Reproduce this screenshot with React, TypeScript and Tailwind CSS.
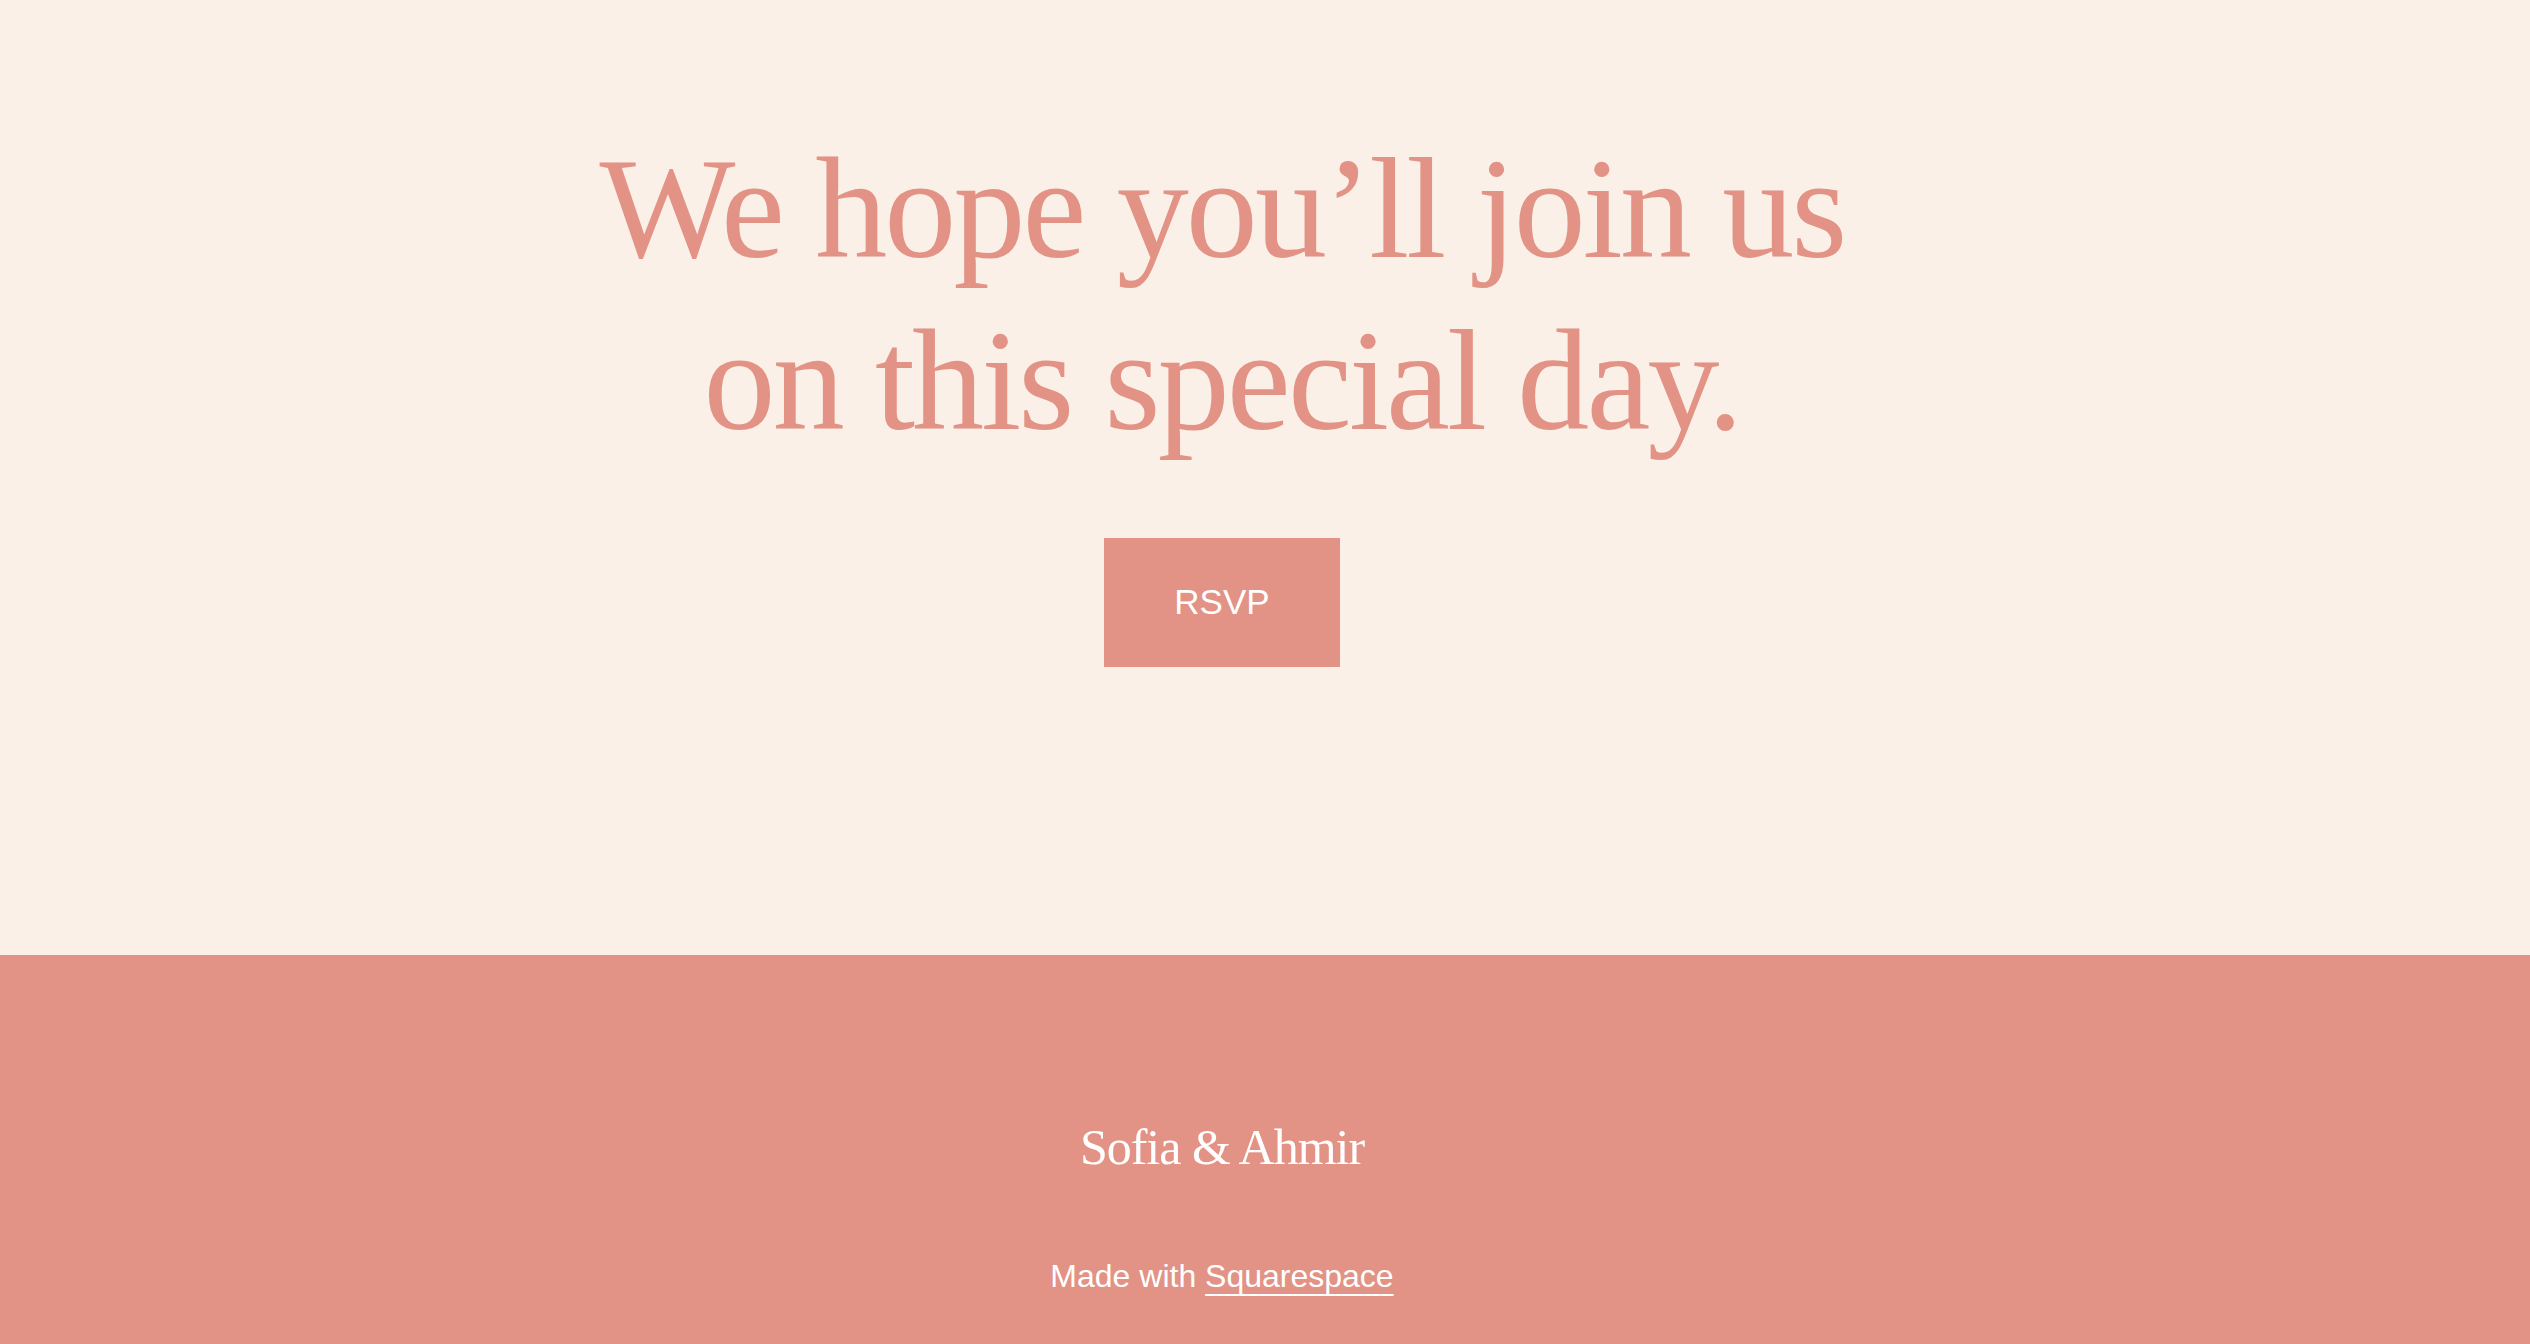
export default function App() {
  return (
    <div className="flex min-h-screen flex-col bg-[#fbf0e7]">
      {/* Invitation */}
      <section className="flex h-[955px] flex-col items-center pr-[86px] pt-[123px]">
        <h1 className="text-center font-['Liberation_Serif',serif] text-[144px] font-normal leading-[172px] tracking-[-0.02em] text-[#e29385]">
          We hope you’ll join us
          <br />
          on this special day.
        </h1>
        <a
          href="#"
          className="mt-[71px] flex h-[129px] w-[236px] items-center justify-center bg-[#e29385] font-['Liberation_Sans',sans-serif] text-[35px] text-white"
        >
          RSVP
        </a>
      </section>

      {/* Footer */}
      <footer className="flex flex-1 flex-col items-center bg-[#e29385] pb-[60px] pr-[86px] pt-[160px] text-white">
        <p className="font-['Liberation_Serif',serif] text-[50px] leading-[65px] tracking-[-0.02em]">
          Sofia &amp; Ahmir
        </p>
        <p className="mt-[77px] font-['Liberation_Sans',sans-serif] text-[32px] leading-[38px]">
          Made with{" "}
          <a href="#" className="underline decoration-2 underline-offset-[7px]">
            Squarespace
          </a>
        </p>
      </footer>
    </div>
  );
}
